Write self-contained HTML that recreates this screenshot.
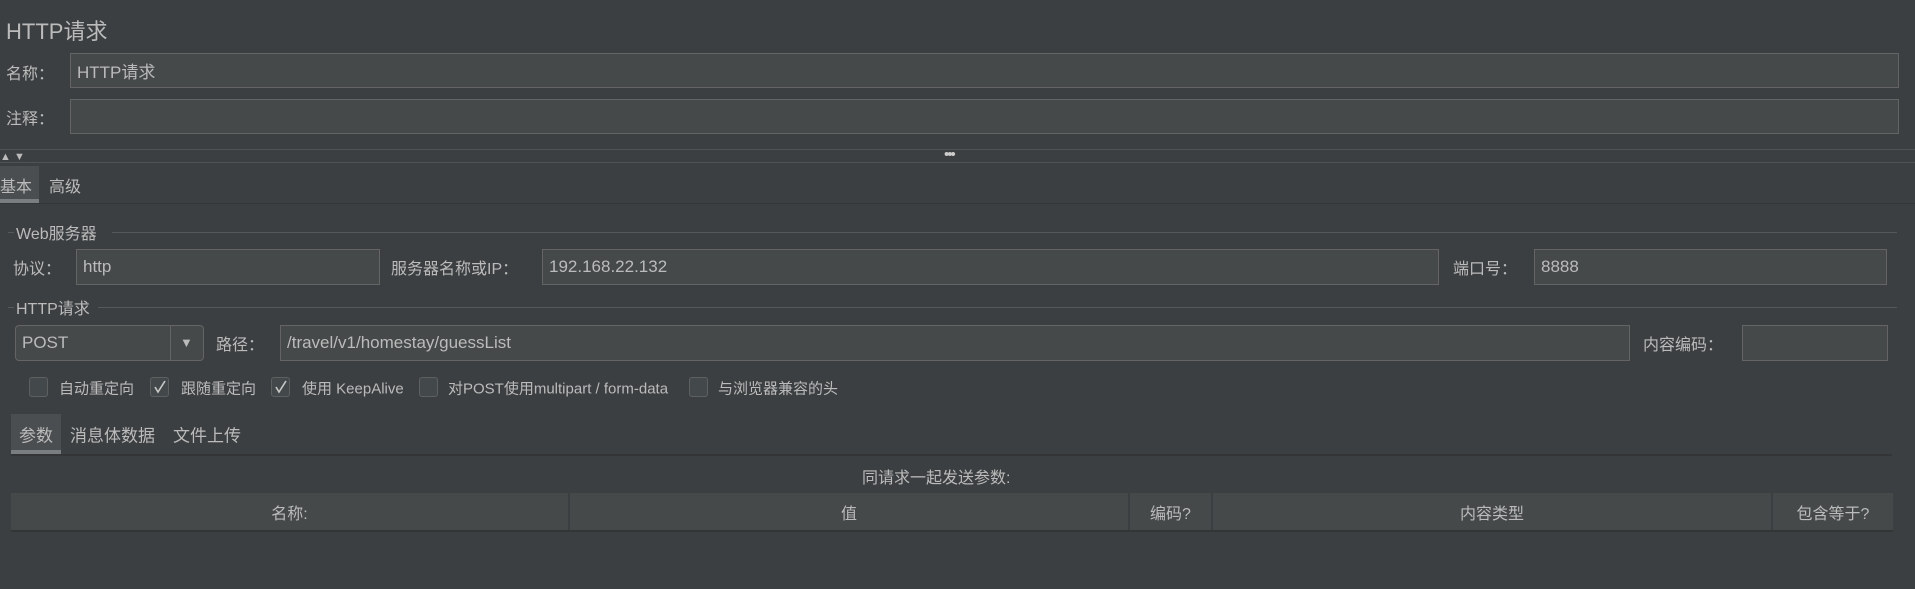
<!DOCTYPE html>
<html><head><meta charset="utf-8"><style>
*{box-sizing:border-box;margin:0;padding:0}
body{width:1915px;height:589px;background:#3c3f41;color:#bbbbbb;font-family:"Liberation Sans","Noto Sans CJK SC",sans-serif;font-size:16px;position:relative;overflow:hidden}
.a{position:absolute;white-space:nowrap}
.f{position:absolute;background:#45494a;border:1px solid #646464;padding-left:6px;display:flex;align-items:center;color:#bbbbbb;font-size:17px}
.l{position:absolute;height:0;border-top:1px solid #555759}
.lab{position:absolute;white-space:nowrap;transform:translateY(-50%)}
.cb{position:absolute;width:19px;height:20px;border:1px solid #5e6060;border-radius:3px;background:#43494a;top:377px}
.cb svg{position:absolute;left:2px;top:2px}
.th{position:absolute;top:493px;height:37px;background:#45494a;display:flex;align-items:center;justify-content:center;font-size:16px;border-right:2px solid #3c3f41}
</style></head><body>
<div class="a" style="left:6px;top:14px;font-size:22px">HTTP请求</div>
<div class="lab" style="left:6px;top:72px">名称：</div>
<div class="f" style="left:70px;top:53px;width:1829px;height:35px">HTTP请求</div>
<div class="lab" style="left:6px;top:117px">注释：</div>
<div class="f" style="left:70px;top:99px;width:1829px;height:35px"></div>
<div class="l" style="left:0;top:149px;width:1915px;border-color:#505254"></div>
<div class="a" style="left:0;top:151px;font-size:11px;color:#bbb">▲ ▼</div>
<div class="a" style="left:944px;top:146px;font-size:15px;color:#ccc;letter-spacing:-2px">•••</div>
<div class="l" style="left:0;top:162px;width:1915px;border-color:#505254"></div>
<div class="a" style="left:0;top:166px;width:39px;height:37px;background:#4b4e50;border-bottom:4px solid #7b7e80"></div>
<div class="lab" style="left:0;top:185px">基本</div>
<div class="lab" style="left:49px;top:185px">高级</div>
<div class="l" style="left:0;top:203px;width:1915px;border-color:#333537"></div>

<div class="l" style="left:8px;top:232px;width:6px"></div>
<div class="lab" style="left:16px;top:232px">Web服务器</div>
<div class="l" style="left:112px;top:232px;width:1785px"></div>
<div class="lab" style="left:13px;top:267px">协议：</div>
<div class="f" style="left:76px;top:249px;width:304px;height:36px">http</div>
<div class="lab" style="left:391px;top:267px">服务器名称或IP：</div>
<div class="f" style="left:542px;top:249px;width:897px;height:36px">192.168.22.132</div>
<div class="lab" style="left:1453px;top:267px">端口号：</div>
<div class="f" style="left:1534px;top:249px;width:353px;height:36px">8888</div>

<div class="l" style="left:8px;top:307px;width:6px"></div>
<div class="lab" style="left:16px;top:307px">HTTP请求</div>
<div class="l" style="left:98px;top:307px;width:1799px"></div>
<div class="f" style="left:15px;top:325px;width:189px;height:36px;border-radius:4px;background:#45494a">POST</div>
<div class="a" style="left:170px;top:326px;width:1px;height:34px;background:#646464"></div>
<div class="a" style="left:180px;top:335px;font-size:13px;color:#bbb">▼</div>
<div class="lab" style="left:216px;top:343px">路径：</div>
<div class="f" style="left:280px;top:325px;width:1350px;height:36px">/travel/v1/homestay/guessList</div>
<div class="lab" style="left:1643px;top:343px">内容编码：</div>
<div class="f" style="left:1742px;top:325px;width:146px;height:36px"></div>

<div class="cb" style="left:29px"></div>
<div class="lab" style="left:59px;top:388px;font-size:15px">自动重定向</div>
<div class="cb" style="left:150px"><svg width="14" height="14" viewBox="0 0 14 14"><path d="M2 7 L5 12 L12 1" stroke="#c8c8c8" stroke-width="1.6" fill="none"/></svg></div>
<div class="lab" style="left:181px;top:388px;font-size:15px">跟随重定向</div>
<div class="cb" style="left:271px"><svg width="14" height="14" viewBox="0 0 14 14"><path d="M2 7 L5 12 L12 1" stroke="#c8c8c8" stroke-width="1.6" fill="none"/></svg></div>
<div class="lab" style="left:302px;top:388px;font-size:15px">使用 KeepAlive</div>
<div class="cb" style="left:419px"></div>
<div class="lab" style="left:448px;top:388px;font-size:15px">对POST使用multipart / form-data</div>
<div class="cb" style="left:689px"></div>
<div class="lab" style="left:718px;top:388px;font-size:15px">与浏览器兼容的头</div>

<div class="a" style="left:11px;top:414px;width:50px;height:40px;background:#4b4e50;border-bottom:4px solid #7b7e80"></div>
<div class="lab" style="left:19px;top:434px;font-size:17px">参数</div>
<div class="lab" style="left:70px;top:434px;font-size:17px">消息体数据</div>
<div class="lab" style="left:173px;top:434px;font-size:17px">文件上传</div>
<div class="l" style="left:11px;top:454px;width:1881px;border-top:2px solid #333537"></div>
<div class="lab" style="left:862px;top:476px">同请求一起发送参数:</div>

<div class="th" style="left:11px;width:559px">名称:</div>
<div class="th" style="left:570px;width:560px">值</div>
<div class="th" style="left:1130px;width:83px">编码?</div>
<div class="th" style="left:1213px;width:560px">内容类型</div>
<div class="th" style="left:1773px;width:120px;border-right:none">包含等于?</div>
<div class="l" style="left:11px;top:530px;width:1882px;border-top:2px solid #333537"></div>
</body></html>
